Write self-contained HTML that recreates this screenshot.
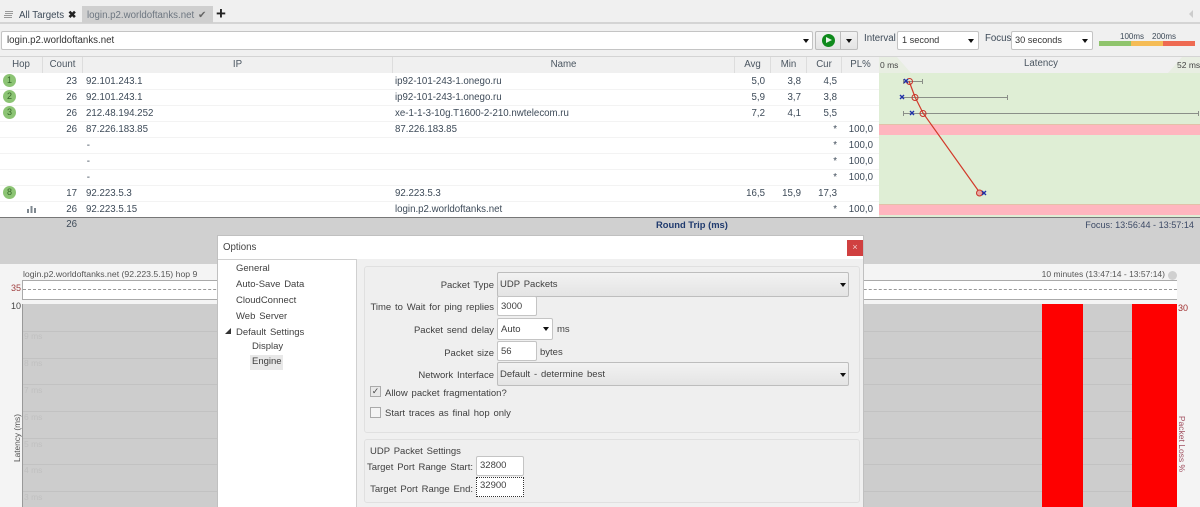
<!DOCTYPE html>
<html><head><meta charset="utf-8"><style>
html,body{margin:0;padding:0}
body{width:1200px;height:507px;overflow:hidden;position:relative;background:#f4f4f4;font:9.7px/16px "Liberation Sans",sans-serif;color:#3d4a58}
div{position:absolute;white-space:nowrap;box-sizing:border-box}
.r{text-align:right}.c{text-align:center}
.h{top:57px;height:16px;background:#f0f0f0;border-right:1px solid #ddd;text-align:center;line-height:16px;color:#4a5560}
.l{height:1px;left:0;width:879px;background:#f3f3f3}
.b{width:13px;height:13px;border-radius:50%;background:#8cc474;left:3px;text-align:center;line-height:12px;font-size:9px;color:#37692a}
.sel{background:#fff;border:1px solid #c4c4c4;border-radius:2px}
.gr{background:linear-gradient(#f2f2f2,#e4e4e4);border:1px solid #bdbdbd;border-radius:2px}
.ar{width:0;height:0;border-left:3.5px solid transparent;border-right:3.5px solid transparent;border-top:4px solid #111}
.g{left:23px;width:1154px;height:1px;background:#c2c2c2}
.gp{background:#efefef;border:1px solid #e0e0e0;border-radius:3px}
.f{font-size:9.5px;word-spacing:1.2px;color:#404040}
.m{left:24px;font-size:8.5px;color:#c0c0c0}
</style></head><body>
<!-- top -->
<div style="left:0;top:0;width:1200px;height:57px;background:#f0f0f0"></div>
<div style="left:0;top:22px;width:1200px;height:2px;background:#d4d4d4"></div>
<div style="left:5px;top:11px;width:8px;height:1px;background:#999;box-shadow:0 2px #999,-1px 4px #999,-1px 6px #999"></div>
<div style="left:19px;top:8px">All Targets</div>
<div style="left:68px;top:8px;font-weight:bold;font-size:10px;color:#222">✖</div>
<div style="left:82px;top:6px;width:131px;height:17px;background:#cfcfcf"></div>
<div style="left:87px;top:8px;color:#6d7680">login.p2.worldoftanks.net</div>
<div style="left:198px;top:8px;font-size:10px;color:#666">✔</div>
<div style="left:216px;top:6px;font-size:17px;font-weight:bold;color:#222;line-height:16px">+</div>
<div style="left:1189px;top:10px;border-right:4px solid #ccc;border-top:4px solid transparent;border-bottom:4px solid transparent"></div>
<!-- toolbar -->
<div class="sel" style="left:1px;top:31px;width:812px;height:19px"></div>
<div style="left:7px;top:33px;color:#333">login.p2.worldoftanks.net</div>
<div class="ar" style="left:803px;top:39px"></div>
<div class="gr" style="left:815px;top:31px;width:43px;height:19px"></div>
<div style="left:840px;top:31px;width:1px;height:19px;background:#bdbdbd"></div>
<div style="left:822px;top:34px;width:13px;height:13px;border-radius:50%;background:#0f8a1c"></div>
<div style="left:826px;top:37px;border-left:6px solid #e8f5e8;border-top:3.5px solid transparent;border-bottom:3.5px solid transparent"></div>
<div class="ar" style="left:846px;top:39px"></div>
<div style="left:864px;top:31px">Interval</div>
<div class="sel" style="left:897px;top:31px;width:82px;height:19px"></div>
<div style="left:902px;top:32px;color:#333;font-size:9.2px">1 second</div>
<div class="ar" style="left:968px;top:39px"></div>
<div style="left:985px;top:31px">Focus</div>
<div class="sel" style="left:1011px;top:31px;width:82px;height:19px"></div>
<div style="left:1015px;top:32px;color:#333;font-size:9.2px">30 seconds</div>
<div class="ar" style="left:1082px;top:39px"></div>
<div style="left:1120px;top:30px;font-size:8px;line-height:13px">100ms</div>
<div style="left:1152px;top:30px;font-size:8px;line-height:13px">200ms</div>
<div style="left:1099px;top:41px;width:32px;height:5px;background:#8fc46c"></div>
<div style="left:1131px;top:41px;width:32px;height:5px;background:#f5bc56"></div>
<div style="left:1163px;top:41px;width:32px;height:5px;background:#ee6a52"></div>
<!-- header -->
<div style="left:0;top:56px;width:1200px;height:1px;background:#d4d4d4"></div>
<div style="left:0;top:73px;width:1200px;height:144px;background:#fff"></div>
<div class="h" style="left:0;width:43px">Hop</div>
<div class="h" style="left:43px;width:40px">Count</div>
<div class="h" style="left:83px;width:310px">IP</div>
<div class="h" style="left:393px;width:342px">Name</div>
<div class="h" style="left:735px;width:36px">Avg</div>
<div class="h" style="left:771px;width:36px">Min</div>
<div class="h" style="left:807px;width:35px">Cur</div>
<div class="h" style="left:842px;width:37px;border:0">PL%</div>
<div style="left:879px;top:57px;width:321px;height:16px;background:#e8eee2"></div>
<svg style="position:absolute;left:879px;top:57px" width="321" height="16"><path d="M18 0L32 16H289L303 0Z" fill="#f0f0f0"/></svg>
<div style="left:880px;top:57px;font-size:8.5px;color:#444">0 ms</div>
<div style="left:1024px;top:56px;color:#4a5560">Latency</div>
<div style="left:1177px;top:57px;font-size:8.5px;color:#444">52 ms</div>
<!-- rows -->
<div class="l" style="top:89px"></div><div class="l" style="top:105px"></div><div class="l" style="top:121px"></div><div class="l" style="top:137px"></div><div class="l" style="top:153px"></div><div class="l" style="top:169px"></div><div class="l" style="top:185px"></div><div class="l" style="top:201px"></div>
<div class="b" style="top:74px">1</div><div class="b" style="top:90px">2</div><div class="b" style="top:106px">3</div><div class="b" style="top:186px">8</div>
<svg style="position:absolute;left:27px;top:204px" width="10" height="10"><path d="M0 5h2v4H0zM3.500 2h2v7h-2zM7 4h2v5H7z" fill="#7f8890"/></svg>

<div class="r" style="left:40px;width:37px;top:74px">23</div><div style="left:86px;top:74px">92.101.243.1</div><div style="left:395px;top:74px">ip92-101-243-1.onego.ru</div>
<div class="r" style="left:730px;width:35px;top:74px">5,0</div><div class="r" style="left:766px;width:35px;top:74px">3,8</div><div class="r" style="left:802px;width:35px;top:74px">4,5</div>

<div class="r" style="left:40px;width:37px;top:90px">26</div><div style="left:86px;top:90px">92.101.243.1</div><div style="left:395px;top:90px">ip92-101-243-1.onego.ru</div>
<div class="r" style="left:730px;width:35px;top:90px">5,9</div><div class="r" style="left:766px;width:35px;top:90px">3,7</div><div class="r" style="left:802px;width:35px;top:90px">3,8</div>

<div class="r" style="left:40px;width:37px;top:106px">26</div><div style="left:86px;top:106px">212.48.194.252</div><div style="left:395px;top:106px">xe-1-1-3-10g.T1600-2-210.nwtelecom.ru</div>
<div class="r" style="left:730px;width:35px;top:106px">7,2</div><div class="r" style="left:766px;width:35px;top:106px">4,1</div><div class="r" style="left:802px;width:35px;top:106px">5,5</div>

<div class="r" style="left:40px;width:37px;top:122px">26</div><div style="left:86px;top:122px">87.226.183.85</div><div style="left:395px;top:122px">87.226.183.85</div>
<div class="r" style="left:802px;width:35px;top:122px">*</div><div class="r" style="left:838px;width:35px;top:122px">100,0</div>

<div class="r" style="left:40px;width:50px;top:138px">-</div><div class="r" style="left:802px;width:35px;top:138px">*</div><div class="r" style="left:838px;width:35px;top:138px">100,0</div>
<div class="r" style="left:40px;width:50px;top:154px">-</div><div class="r" style="left:802px;width:35px;top:154px">*</div><div class="r" style="left:838px;width:35px;top:154px">100,0</div>
<div class="r" style="left:40px;width:50px;top:170px">-</div><div class="r" style="left:802px;width:35px;top:170px">*</div><div class="r" style="left:838px;width:35px;top:170px">100,0</div>

<div class="r" style="left:40px;width:37px;top:186px">17</div><div style="left:86px;top:186px">92.223.5.3</div><div style="left:395px;top:186px">92.223.5.3</div>
<div class="r" style="left:730px;width:35px;top:186px">16,5</div><div class="r" style="left:766px;width:35px;top:186px">15,9</div><div class="r" style="left:802px;width:35px;top:186px">17,3</div>

<div class="r" style="left:40px;width:37px;top:202px">26</div><div style="left:86px;top:202px">92.223.5.15</div><div style="left:395px;top:202px">login.p2.worldoftanks.net</div>
<div class="r" style="left:802px;width:35px;top:202px">*</div><div class="r" style="left:838px;width:35px;top:202px">100,0</div>
<!-- latency chart -->
<svg style="position:absolute;left:0;top:0" width="1200" height="217">
<rect x="879" y="73" width="321" height="144" fill="#dfeed5"/>
<rect x="879" y="124" width="321" height="11" fill="#ffb6bf"/><rect x="879" y="124" width="321" height="1" fill="#e3c0a8"/>
<rect x="879" y="204" width="321" height="11" fill="#ffb6bf"/><rect x="879" y="204" width="321" height="1" fill="#e3c0a8"/>
<g stroke="#8a8f88" fill="none"><path d="M903 81.500H922M922.500 79v5M903.500 79v5M902 97.500H1007M1007.500 95v5M903 113.500H1198M1198.500 111v5M903.500 111v5"/></g>
<path d="M909 81L915 97L923 113L980 193" stroke="#d23a2a" stroke-width="1.200" fill="none"/>
<g fill="none" stroke="#c8322a" stroke-width="1"><circle cx="909.500" cy="81.500" r="3"/><circle cx="915" cy="97.500" r="3"/><circle cx="923" cy="113.500" r="3"/><circle cx="979.500" cy="193" r="3" fill="#e8a8a0"/></g>
<g stroke="#2030a8" stroke-width="1.400" fill="none"><path d="M904 79l4 4m0-4l-4 4M900 95l4 4m0-4l-4 4M910 111l4 4m0-4l-4 4M982 191l4 4m0-4l-4 4"/></g>
</svg>
<!-- gray band -->
<div style="left:0;top:217px;width:1200px;height:47px;background:#d0d0d0;border-top:1px solid #777"></div>
<div class="r" style="left:40px;width:37px;top:217px">26</div>
<div style="left:656px;top:217px;font-weight:bold;font-size:9.4px;color:#1f3a6e">Round Trip (ms)</div>
<div class="r" style="left:1000px;width:194px;top:217px;font-size:9.1px;color:#3d4a66">Focus: 13:56:44 - 13:57:14</div>
<!-- chart -->
<div style="left:23px;top:266px;font-size:8.7px;color:#555">login.p2.worldoftanks.net (92.223.5.15) hop 9</div>
<div class="r" style="left:980px;width:185px;top:266px;font-size:8.5px;color:#555">10 minutes (13:47:14 - 13:57:14)</div>
<div style="left:1168px;top:271px;width:9px;height:9px;border-radius:50%;background:#d0d0d0"></div>
<div style="left:22px;top:280px;width:1155px;height:20px;background:#fff;border:1px solid #aaa;border-right:0"></div>
<div style="left:23px;top:289px;width:1154px;height:0;border-top:1px dashed #999"></div>
<div style="left:11px;top:280px;font-size:9px;color:#a04040">35</div>
<div style="left:11px;top:298px;font-size:9px;color:#444">10</div>
<div style="left:22px;top:304px;width:1155px;height:203px;background:#cdcdcd;border-left:1px solid #999"></div>
<div class="g" style="top:331px"></div><div class="g" style="top:358px"></div><div class="g" style="top:384px"></div><div class="g" style="top:411px"></div><div class="g" style="top:438px"></div><div class="g" style="top:464px"></div><div class="g" style="top:491px"></div>
<div class="m" style="top:328px">9 ms</div>
<div class="m" style="top:355px">8 ms</div>
<div class="m" style="top:382px">7 ms</div>
<div class="m" style="top:409px">6 ms</div>
<div class="m" style="top:436px">5 ms</div>
<div class="m" style="top:462px">4 ms</div>
<div class="m" style="top:489px">3 ms</div>
<div style="left:1042px;top:304px;width:41px;height:203px;background:#fe0000"></div>
<div style="left:1132px;top:304px;width:45px;height:203px;background:#fe0000"></div>
<div style="left:1178px;top:300px;font-size:9px;color:#a03030">30</div>
<div style="left:10px;top:438px;transform:translate(-50%,-50%) rotate(-90deg);margin-left:7px;font-size:8.3px;color:#555">Latency (ms)</div>
<div style="left:1176px;top:444px;transform:translate(-50%,-50%) rotate(90deg);margin-left:6px;font-size:8.5px;color:#a05060">Packet Loss %</div>
<!-- dialog -->
<div style="left:217px;top:235px;width:647px;height:272px;background:#f0f0f0;border:1px solid #c0c0c0;border-bottom:0"></div>
<div style="left:218px;top:236px;width:645px;height:23px;background:#fff"></div>
<div style="left:223px;top:240px;color:#444">Options</div>
<div style="left:847px;top:240px;width:16px;height:16px;background:#d04040;color:#f0d0d0;text-align:center;font-size:9px;line-height:15px">×</div>
<div style="left:218px;top:259px;width:139px;height:248px;background:#fff;border:1px solid #d0d0d0;border-left:0;border-bottom:0"></div>
<div class="f" style="left:236px;top:261px">General</div>
<div class="f" style="left:236px;top:277px">Auto-Save Data</div>
<div class="f" style="left:236px;top:293px">CloudConnect</div>
<div class="f" style="left:236px;top:309px">Web Server</div>
<svg style="position:absolute;left:225px;top:328px" width="7" height="7"><path d="M6 0V6H0Z" fill="#333"/></svg>
<div class="f" style="left:236px;top:325px">Default Settings</div>
<div class="f" style="left:252px;top:339px">Display</div>
<div style="left:250px;top:355px;width:33px;height:15px;background:#e8e8e8"></div>
<div class="f" style="left:252px;top:354px">Engine</div>
<!-- panel 1 -->
<div class="gp" style="left:364px;top:266px;width:496px;height:167px"></div>
<div class="gr" style="left:497px;top:272px;width:352px;height:25px"></div>
<div class="f" style="left:500px;top:277px">UDP Packets</div>
<div class="ar" style="left:840px;top:283px"></div>
<div class="f r" style="left:370px;width:124px;top:278px">Packet Type</div>
<div class="f r" style="left:366px;width:128px;top:300px">Time to Wait for ping replies</div>
<div class="sel" style="left:497px;top:296px;width:40px;height:20px"></div>
<div class="f" style="left:501px;top:299px">3000</div>
<div class="f r" style="left:370px;width:124px;top:323px">Packet send delay</div>
<div class="sel" style="left:497px;top:318px;width:56px;height:22px"></div>
<div class="f" style="left:501px;top:322px">Auto</div>
<div class="ar" style="left:543px;top:327px"></div>
<div class="f" style="left:557px;top:322px">ms</div>
<div class="f r" style="left:370px;width:124px;top:346px">Packet size</div>
<div class="sel" style="left:497px;top:341px;width:40px;height:20px"></div>
<div class="f" style="left:501px;top:344px">56</div>
<div class="f" style="left:540px;top:345px">bytes</div>
<div class="f r" style="left:370px;width:124px;top:368px">Network Interface</div>
<div class="gr" style="left:497px;top:362px;width:352px;height:24px"></div>
<div class="f" style="left:500px;top:367px">Default - determine best</div>
<div class="ar" style="left:840px;top:373px"></div>
<div style="left:370px;top:386px;width:11px;height:11px;background:#e8e8e8;border:1px solid #aaa;font-size:9px;line-height:9px;text-align:center;color:#444">✓</div>
<div class="f" style="left:385px;top:386px">Allow packet fragmentation?</div>
<div style="left:370px;top:407px;width:11px;height:11px;background:#f4f4f4;border:1px solid #aaa"></div>
<div class="f" style="left:385px;top:406px">Start traces as final hop only</div>
<!-- panel 2 -->
<div class="gp" style="left:364px;top:439px;width:496px;height:64px"></div>
<div class="f" style="left:370px;top:444px">UDP Packet Settings</div>
<div class="f r" style="left:366px;width:107px;top:460px">Target Port Range Start:</div>
<div class="sel" style="left:476px;top:456px;width:48px;height:20px"></div>
<div class="f" style="left:480px;top:458px">32800</div>
<div class="f r" style="left:366px;width:107px;top:482px">Target Port Range End:</div>
<div style="left:476px;top:477px;width:48px;height:20px;background:#fff;border:1px dotted #333"></div>
<div class="f" style="left:480px;top:478px">32900</div>
</body></html>
